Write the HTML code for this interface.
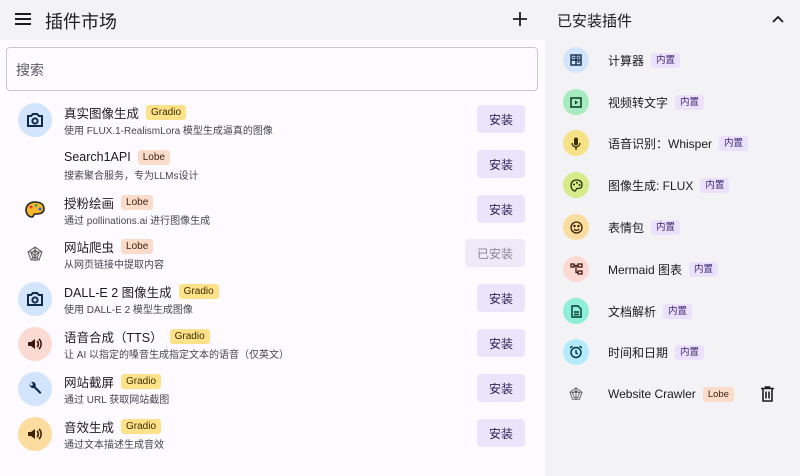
<!DOCTYPE html>
<html><head><meta charset="utf-8"><style>
*{margin:0;padding:0;box-sizing:border-box}
body{width:800px;height:476px;overflow:hidden;font-family:"Liberation Sans","Noto Sans CJK SC",sans-serif;background:#f3f2f5;position:relative;color:#1c1b1f}
.hdr{position:absolute;left:0;top:0;width:545px;height:40px;background:#f3f2f5}
.left{position:absolute;left:0;top:40px;width:545px;height:436px;background:#fdfbff}
.search{position:absolute;left:6px;top:47px;width:532px;height:44px;border:1px solid #c9c6cf;border-radius:4px;font-size:14px;color:#5a5963;padding:12px 9px}
.row{position:absolute;left:0;width:545px;height:45px}
.ic{position:absolute;left:18px;top:6px;width:34px;height:34px;border-radius:50%;display:flex;align-items:center;justify-content:center}
.t{position:absolute;left:64px;top:6px;height:18px;font-size:12.5px;color:#1c1b1f;white-space:nowrap;display:flex;align-items:center}
.s{position:absolute;left:64px;top:25px;font-size:10px;color:#46464f;white-space:nowrap}
.tag{display:inline-block;font-size:10px;padding:1px 5px;border-radius:3px;margin-left:7px;line-height:13px}
.g{background:#fde28a;color:#3a2b00}
.l{background:#fbdccb;color:#3d2414}
.n{background:#ebe1fc;color:#3b2770}
.btn{position:absolute;left:477px;top:8px;width:48px;height:28px;border-radius:4px;background:#ebe4fb;color:#2b1f55;font-size:12px;display:flex;align-items:center;justify-content:center}
.btn.d{left:465px;width:60px;color:#8b8699;background:#eeeaf8}
.rrow{position:absolute;left:545px;width:255px;height:30px}
.ric{position:absolute;left:18px;top:2px;width:26px;height:26px;border-radius:50%;display:flex;align-items:center;justify-content:center}
.rt{position:absolute;left:63px;top:6px;height:18px;font-size:12px;white-space:nowrap;display:flex;align-items:center;color:#1c1b1f}
.rt .tag{font-size:9.5px}
</style></head><body>
<div class="hdr">
<svg style="position:absolute;left:14px;top:12px" width="18" height="14" viewBox="0 0 18 14"><path d="M1 2h16M1 7h16M1 12h16" stroke="#1c1b1f" stroke-width="2"/></svg>
<div style="position:absolute;left:45px;top:8px;font-size:18px">插件市场</div>
<svg style="position:absolute;left:513px;top:12px" width="14" height="14" viewBox="0 0 14 14"><path d="M7 0v14M0 7h14" stroke="#1c1b1f" stroke-width="1.8"/></svg>
</div>
<div class="left"></div>
<div class="search">搜索</div>

<div class="row" style="top:97px"><div class="ic" style="background:#d3e4fd"><svg width="18" height="16" viewBox="0 0 18 16"><path d="M2 4h3l2-2h4l2 2h3v10H2z" fill="none" stroke="#0d2a4a" stroke-width="2"/><circle cx="9" cy="9" r="2.6" fill="none" stroke="#0d2a4a" stroke-width="2"/></svg></div><div class="t">真实图像生成<span class="tag g">Gradio</span></div><div class="s">使用 FLUX.1-RealismLora 模型生成逼真的图像</div><div class="btn">安装</div></div>
<div class="row" style="top:142px"><div class="t">Search1API<span class="tag l">Lobe</span></div><div class="s">搜索聚合服务，专为LLMs设计</div><div class="btn">安装</div></div>
<div class="row" style="top:187px"><div class="ic"><svg width="20" height="18" viewBox="0 0 20 18"><path d="M10 1C4 1 1 5 1 9c0 4 3 7 6 7 2 0 1-3 3-3 3 0 9 0 9-5S15 1 10 1z" fill="#f6b72a" stroke="#222" stroke-width="1.6"/><circle cx="6" cy="6" r="1.5" fill="#e33"/><circle cx="11" cy="4.5" r="1.5" fill="#3a6"/><circle cx="15" cy="8" r="1.5" fill="#36c"/></svg></div><div class="t">授粉绘画<span class="tag l">Lobe</span></div><div class="s">通过 pollinations.ai 进行图像生成</div><div class="btn">安装</div></div>
<div class="row" style="top:231px"><div class="ic"><svg width="16" height="16" viewBox="0 0 16 16" fill="none" stroke="#666" stroke-width="1.1"><path d="M8 1l7 5-3 8H4L1 6z M8 4l4 3-2 5H6L4 7z M8 1v14M1 6l14 0M4 14l8-8M12 14L4 6"/></svg></div><div class="t">网站爬虫<span class="tag l">Lobe</span></div><div class="s">从网页链接中提取内容</div><div class="btn d">已安装</div></div>
<div class="row" style="top:276px"><div class="ic" style="background:#d3e4fd"><svg width="18" height="16" viewBox="0 0 18 16"><path d="M2 4h3l2-2h4l2 2h3v10H2z" fill="none" stroke="#0d2a4a" stroke-width="2"/><circle cx="9" cy="9" r="2.6" fill="none" stroke="#0d2a4a" stroke-width="2"/></svg></div><div class="t">DALL-E 2 图像生成<span class="tag g">Gradio</span></div><div class="s">使用 DALL-E 2 模型生成图像</div><div class="btn">安装</div></div>
<div class="row" style="top:321px"><div class="ic" style="background:#fcdad3"><svg width="16" height="14" viewBox="0 0 16 14"><path d="M1 5h3l4-3v10L4 9H1z" fill="#3d1510"/><path d="M10 4a4 4 0 0 1 0 6M12 2a7 7 0 0 1 0 10" fill="none" stroke="#3d1510" stroke-width="1.6"/></svg></div><div class="t">语音合成（TTS）<span class="tag g">Gradio</span></div><div class="s">让 AI 以指定的嗓音生成指定文本的语音（仅英文）</div><div class="btn">安装</div></div>
<div class="row" style="top:366px"><div class="ic" style="background:#d3e4fd"><svg width="16" height="16" viewBox="0 0 16 16"><path d="M3 2a3.5 3.5 0 0 0 4 5l6 6 1.5-1.5-6-6A3.5 3.5 0 0 0 4 1l2 2-1 2-2-1z" fill="#0d2a4a"/></svg></div><div class="t">网站截屏<span class="tag g">Gradio</span></div><div class="s">通过 URL 获取网站截图</div><div class="btn">安装</div></div>
<div class="row" style="top:411px"><div class="ic" style="background:#fddca0"><svg width="16" height="14" viewBox="0 0 16 14"><path d="M1 5h3l4-3v10L4 9H1z" fill="#3a2500"/><path d="M10 4a4 4 0 0 1 0 6M12 2a7 7 0 0 1 0 10" fill="none" stroke="#3a2500" stroke-width="1.6"/></svg></div><div class="t">音效生成<span class="tag g">Gradio</span></div><div class="s">通过文本描述生成音效</div><div class="btn">安装</div></div>

<div style="position:absolute;left:557px;top:10px;font-size:15px">已安装插件</div>
<svg style="position:absolute;left:772px;top:15px" width="12" height="8" viewBox="0 0 12 8"><path d="M1 7l5-5 5 5" fill="none" stroke="#1c1b1f" stroke-width="1.8"/></svg>

<div class="rrow" style="top:45px"><div class="ric" style="background:#d3e4fd"><svg width="12" height="12" viewBox="0 0 12 12" fill="none" stroke="#0d2a4a" stroke-width="1.4"><rect x="1" y="1" width="10" height="10"/><path d="M6 1v10M1 6h10M2.5 3.5h2M7.5 3.5h2M8.5 2.5v2M7.5 8h2"/></svg></div><div class="rt">计算器<span class="tag n">内置</span></div></div>
<div class="rrow" style="top:87px"><div class="ric" style="background:#a6ebc0"><svg width="12" height="11" viewBox="0 0 12 11"><rect x="1" y="1" width="10" height="9" fill="none" stroke="#0a3a1f" stroke-width="1.5"/><path d="M5 3.5v4l3-2z" fill="#0a3a1f"/></svg></div><div class="rt">视频转文字<span class="tag n">内置</span></div></div>
<div class="rrow" style="top:128px"><div class="ric" style="background:#f8e287"><svg width="10" height="13" viewBox="0 0 10 13"><rect x="3" y="0.5" width="4" height="8" rx="2" fill="#3a2e00"/><path d="M1 6a4 4 0 0 0 8 0M5 10v3" fill="none" stroke="#3a2e00" stroke-width="1.3"/></svg></div><div class="rt">语音识别：Whisper<span class="tag n">内置</span></div></div>
<div class="rrow" style="top:170px"><div class="ric" style="background:#d6ec8a"><svg width="13" height="13" viewBox="0 0 13 13"><path d="M6.5 1C3 1 1 3.5 1 6.5S3 12 5 12c1.5 0 .5-2.5 2-2.5 2 0 5 0 5-3.5S10 1 6.5 1z" fill="none" stroke="#243000" stroke-width="1.3"/><circle cx="4" cy="5.5" r="1" fill="#243000"/><circle cx="7" cy="3.8" r="1" fill="#243000"/><circle cx="9.5" cy="6" r="1" fill="#243000"/></svg></div><div class="rt">图像生成: FLUX<span class="tag n">内置</span></div></div>
<div class="rrow" style="top:212px"><div class="ric" style="background:#fddca0"><svg width="13" height="13" viewBox="0 0 13 13" fill="none" stroke="#3a2500" stroke-width="1.3"><circle cx="6.5" cy="6.5" r="5.5"/><path d="M4 8a3 3 0 0 0 5 0"/><circle cx="4.5" cy="5" r=".6" fill="#3a2500"/><circle cx="8.5" cy="5" r=".6" fill="#3a2500"/></svg></div><div class="rt">表情包<span class="tag n">内置</span></div></div>
<div class="rrow" style="top:254px"><div class="ric" style="background:#fcdad3"><svg width="13" height="12" viewBox="0 0 13 12" fill="none" stroke="#3d1510" stroke-width="1.3"><rect x="1" y="1" width="3" height="3"/><rect x="8" y="1" width="4" height="3"/><rect x="8" y="8" width="4" height="3"/><path d="M4 2.5h4M6 2.5v7h2"/></svg></div><div class="rt">Mermaid 图表<span class="tag n">内置</span></div></div>
<div class="rrow" style="top:296px"><div class="ric" style="background:#8eeed8"><svg width="11" height="13" viewBox="0 0 11 13" fill="none" stroke="#00382c" stroke-width="1.4"><path d="M1 1h6l3 3v8H1z M3 7h5M3 9.5h5"/></svg></div><div class="rt">文档解析<span class="tag n">内置</span></div></div>
<div class="rrow" style="top:337px"><div class="ric" style="background:#b4ebfa"><svg width="14" height="14" viewBox="0 0 14 14" fill="none" stroke="#00303c" stroke-width="1.4"><circle cx="7" cy="7.5" r="5"/><path d="M7 5v3l2 1M1 3l2.5-2M13 3l-2.5-2"/></svg></div><div class="rt">时间和日期<span class="tag n">内置</span></div></div>
<div class="rrow" style="top:379px"><div class="ric"><svg width="14" height="14" viewBox="0 0 16 16" fill="none" stroke="#666" stroke-width="1.1"><path d="M8 1l7 5-3 8H4L1 6z M8 4l4 3-2 5H6L4 7z M8 1v14M1 6l14 0"/></svg></div><div class="rt">Website Crawler<span class="tag l">Lobe</span></div>
<svg style="position:absolute;left:216px;top:7px" width="13" height="16" viewBox="0 0 13 16" fill="none" stroke="#1c1b1f" stroke-width="1.6"><path d="M0 2.5h13M4.5 2.5V1h4v1.5M2 2.5v12.5h9V2.5M5 5.5v7M8 5.5v7"/></svg></div>
</body></html>
